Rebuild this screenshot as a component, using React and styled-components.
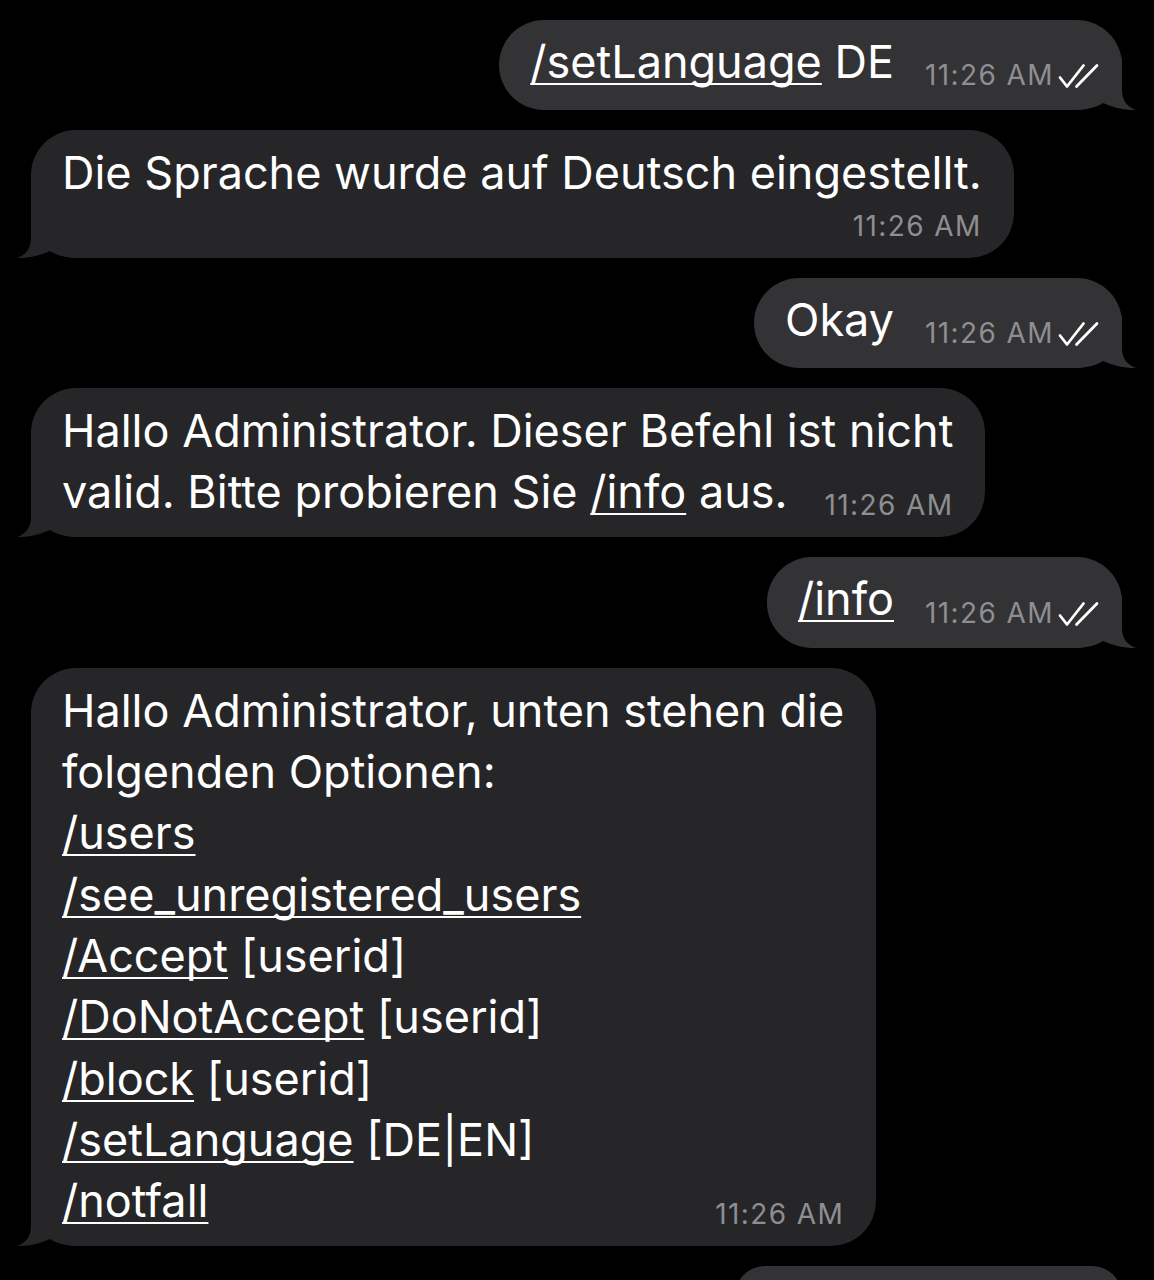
import React from "react";
import styled, { createGlobalStyle } from "styled-components";

const Global = createGlobalStyle`
  html, body { margin: 0; padding: 0; background: #000; }
  body { font-family: Inter, "Noto Sans", "Liberation Sans", sans-serif; }
`;

const Screen = styled.div`
  width: 1154px;
  height: 1280px;
  overflow: hidden;
  background: #000;
  display: flex;
  flex-direction: column;
  gap: 20px;
  padding: 0 32px 0 31px;
  box-sizing: border-box;
`;

const Row = styled.div`
  display: flex;
  flex-shrink: 0;
  justify-content: ${(p) => (p.$out ? "flex-end" : "flex-start")};
  margin-top: ${(p) => p.$mt || 0}px;
`;

const Bubble = styled.div`
  position: relative;
  background: ${(p) => (p.$out ? "#333335" : "#262628")};
  border-radius: 45px;
  padding: ${(p) => (p.$out ? 11 : 12)}px ${(p) => (p.$out ? 22 : 32)}px
    ${(p) => (p.$out ? 18 : 15)}px 31px;
  color: #fff;
  font-size: 45px;
  line-height: 61.3px;
  white-space: nowrap;
`;

const Content = styled.div`
  position: relative;
  z-index: 1;
`;

const Partial = styled.div`
  background: ${(p) => (p.$out ? "#333335" : "#262628")};
  border-radius: 45px;
  width: ${(p) => p.$w}px;
  height: 60px;
`;

const Line = styled.div``;

const LastLine = styled.div`
  display: flex;
  align-items: flex-end;
  justify-content: space-between;
  gap: 31px;
`;

const MetaLine = styled.div`
  display: flex;
  justify-content: flex-end;
  margin: 8px 0 3px;
`;

const Meta = styled.span`
  display: inline-flex;
  flex-shrink: 0;
  align-items: flex-end;
  gap: 3px;
  font-size: 28px;
  line-height: 28px;
  letter-spacing: 1.4px;
  color: #8e8e93;
  margin-bottom: ${(p) => (p.$inline ? 3 : 0)}px;
`;

const CheckSvg = styled.svg`
  flex-shrink: 0;
  display: block;
`;

const Link = styled.span`
  text-decoration: underline;
  text-decoration-thickness: 2px;
  text-underline-offset: 5px;
  text-decoration-skip-ink: none;
`;

const TailSvg = styled.svg`
  position: absolute;
  z-index: 0;
  bottom: 0;
  ${(p) => (p.$out ? "right: -14px; transform: scaleX(-1);" : "left: -14px;")}
`;

const Tail = ({ out }) => (
  <TailSvg $out={out} width="64" height="52" viewBox="0 0 64 52">
    <path
      d="M14,0 L14,32 C14,42 9,49 0,52 C10,52.5 22,50 33,45 C39,49 48,52 64,52 L64,0 Z"
      fill={out ? "#333335" : "#262628"}
    />
  </TailSvg>
);

const Checks = () => (
  <CheckSvg width="43" height="28" viewBox="0 0 43 28">
    <g stroke="#fff" strokeWidth="2.8" strokeLinecap="round" strokeLinejoin="round" fill="none">
      <path d="M3,16.5 L10,25.5 L26.5,4.5" />
      <path d="M19.5,25.5 L40,4.5" />
    </g>
  </CheckSvg>
);

const Time = ({ checks, inline }) => (
  <Meta $inline={inline}>
    <span>11:26 AM</span>
    {checks && <Checks />}
  </Meta>
);

const Outgoing = ({ children }) => (
  <Row $out>
    <Bubble $out>
      <Tail out />
      <Content>
        <LastLine>
          <span>{children}</span>
          <Time checks inline />
        </LastLine>
      </Content>
    </Bubble>
  </Row>
);

export default function App() {
  return (
    <>
      <Global />
      <Screen>
        <Row $mt={-60}>
          <Partial $w={840} />
        </Row>

        <Outgoing>
          <Link>/setLanguage</Link> DE
        </Outgoing>

        <Row>
          <Bubble>
            <Tail />
            <Content>
              <Line>Die Sprache wurde auf Deutsch eingestellt.</Line>
              <MetaLine>
                <Time />
              </MetaLine>
            </Content>
          </Bubble>
        </Row>

        <Outgoing>Okay</Outgoing>

        <Row>
          <Bubble>
            <Tail />
            <Content>
              <Line>Hallo Administrator. Dieser Befehl ist nicht</Line>
              <LastLine>
                <span>
                  valid. Bitte probieren Sie <Link>/info</Link> aus.
                </span>
                <Time inline />
              </LastLine>
            </Content>
          </Bubble>
        </Row>

        <Outgoing>
          <Link>/info</Link>
        </Outgoing>

        <Row>
          <Bubble>
            <Tail />
            <Content>
              <Line>Hallo Administrator, unten stehen die</Line>
              <Line>folgenden Optionen:</Line>
              <Line>
                <Link>/users</Link>
              </Line>
              <Line>
                <Link>/see_unregistered_users</Link>
              </Line>
              <Line>
                <Link>/Accept</Link> [userid]
              </Line>
              <Line>
                <Link>/DoNotAccept</Link> [userid]
              </Line>
              <Line>
                <Link>/block</Link> [userid]
              </Line>
              <Line>
                <Link>/setLanguage</Link> [DE|EN]
              </Line>
              <LastLine>
                <Link>/notfall</Link>
                <Time inline />
              </LastLine>
            </Content>
          </Bubble>
        </Row>

        <Row $out>
          <Partial $out $w={387} />
        </Row>
      </Screen>
    </>
  );
}
